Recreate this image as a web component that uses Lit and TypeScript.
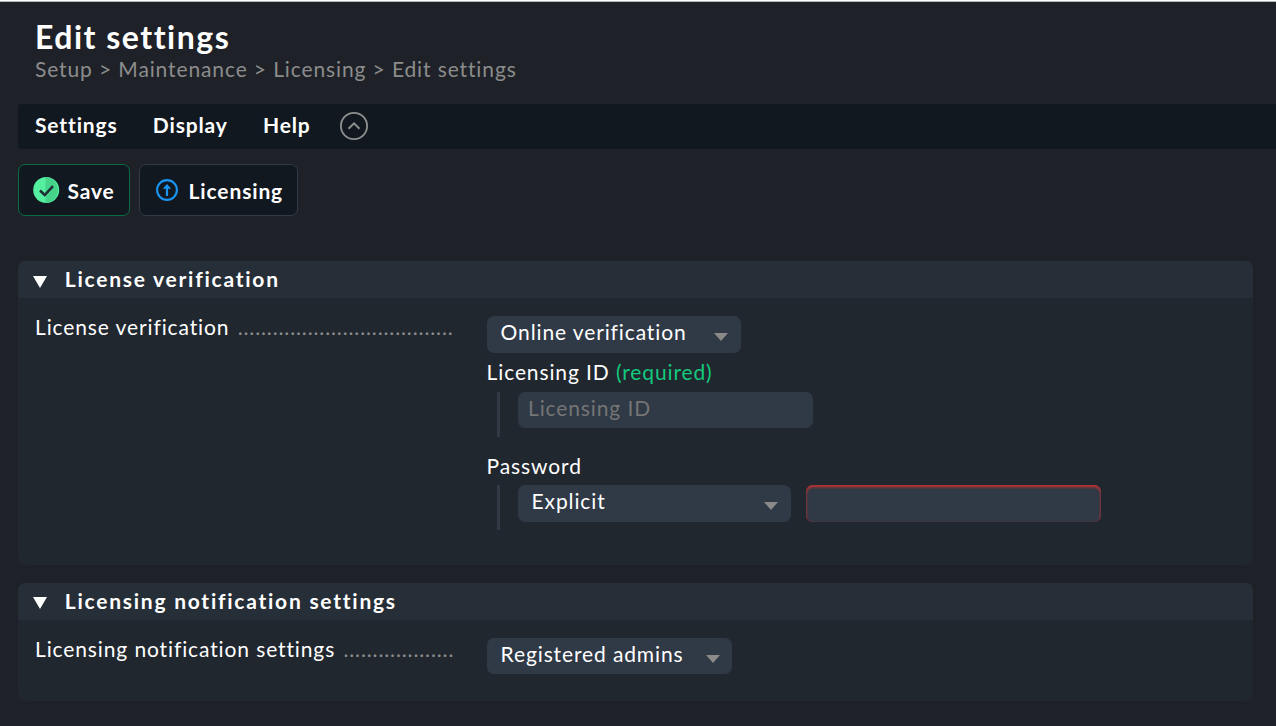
import { LitElement, html, css } from "lit";
import { customElement, property } from "lit/decorators.js";

@customElement("drop-down")
class DropDown extends LitElement {
  @property() value = "";
  static styles = css`
    :host { display: flex; box-sizing: border-box; height: 37px; padding: 0 13px 0 14px; border-radius: 7px; background: #303946; color: #fff; justify-content: space-between; }
    .value { line-height: 32px; white-space: nowrap; }
    svg { display: block; margin-top: 17px; }
  `;
  render() {
    return html`<span class="value">${this.value}</span>
      <svg width="14" height="8" viewBox="0 0 14 8"><path d="M0 0H14L7 8Z" fill="#8c8a88" /></svg>`;
  }
}

@customElement("fold-panel")
class FoldPanel extends LitElement {
  @property() heading = "";
  @property() label = "";
  @property({ type: Number }) dots = 0;
  static styles = css`
    :host { display: flex; flex-direction: column; box-sizing: border-box; border-radius: 7px; overflow: hidden; background: #21272e; }
    .head { display: flex; height: 37px; background: #262e37; padding-left: 15px; gap: 17.8px; font-weight: 700; letter-spacing: 1.75px; line-height: 36px; }
    .head svg { display: block; margin-top: var(--fold-top, 15px); }
    .row { display: flex; padding: 18px 0 0 17px; }
    .label { width: 419px; margin-right: 32.6px; height: 24px; line-height: 22px; white-space: nowrap; }
    .dots { color: #8c8c8c; margin-left: 2px; }
  `;
  render() {
    return html`<div class="head">
        <svg width="14" height="12" viewBox="0 0 14 12"><path d="M0 0H14L7 12Z" fill="#fff" /></svg>
        <span>${this.heading}</span>
      </div>
      <div class="row">
        <div class="label">${this.label} <span class="dots">${".".repeat(this.dots)}</span></div>
        <slot></slot>
      </div>`;
  }
}

@customElement("app-root")
class AppRoot extends LitElement {
  static styles = css`
    :host { display: block; box-sizing: border-box; height: 726px; overflow: hidden; background: #1e2228; color: #fff; font: 21px/24px Lato, sans-serif; letter-spacing: 0.88px; border-top: 1px solid #fff; }
    .page { border-top: 1px solid #b3b7ba; padding: 15px 0 0 18px; }
    .title { margin: 0; padding: 1px 0 0 17px; font-size: 32px; line-height: 38px; height: 37px; font-weight: 700; letter-spacing: 1.5px; }
    .crumbs { padding-left: 17px; line-height: 28px; color: #8c8c8c; }
    .menu { display: flex; box-sizing: border-box; height: 45px; margin-top: 21px; padding: 0 17px; gap: 35.2px; background: #11181f; border-radius: 4px 0 0 4px; font-weight: 700; line-height: 42px; letter-spacing: 0.86px; }
    .menu svg { display: block; margin: 8px 0 0 -6px; }
    .actions { display: flex; gap: 9px; margin-top: 15px; }
    .action { display: flex; box-sizing: border-box; height: 52px; border: 1px solid #313a47; border-radius: 7px; background: #11181f; font-weight: 700; line-height: 52px; letter-spacing: 0.86px; white-space: nowrap; }
    .action svg { display: block; }
    .save { width: 112px; border-color: #0b6b42; padding-left: 14px; gap: 7.4px; }
    .save svg { margin-top: 12px; }
    .lic { width: 159px; padding-left: 16px; gap: 10.6px; }
    .lic svg { margin-top: 14px; }
    .panels { display: flex; flex-direction: column; gap: 18px; width: 1235px; margin-top: 45px; }
    .first { height: 304px; }
    .second { height: 118px; --fold-top: 14px; }
    .online { width: 254px; }
    .registered { width: 245px; height: 36px; padding-right: 12px; }
    .explicit { width: 273px; padding-left: 13.6px; }
    .cap { line-height: 24px; }
    .cap.id { margin: 7px 0 8px; }
    .cap.pw { margin: 17px 0 7px; }
    .req { color: #13c97d; }
    .sub { display: flex; gap: 15px; margin-left: 10.4px; border-left: 3px solid #303946; padding-left: 18px; height: 45px; }
    .field { box-sizing: border-box; width: 295px; height: 36px; border-radius: 7px; background: #303946; color: #757575; padding-left: 10px; line-height: 32px; }
    .field.bad { height: 37px; box-shadow: inset 0 2px 3px 0 #c83232, inset 0 0 1px 0 #c83232; }
  `;
  render() {
    return html`<div class="page">
      <h1 class="title">Edit settings</h1>
      <div class="crumbs">Setup &gt; Maintenance &gt; Licensing &gt; Edit settings</div>
      <div class="menu">
        <span>Settings</span><span>Display</span><span>Help</span>
        <svg width="28" height="28" viewBox="0 0 28 28" fill="none" stroke="#8f8f8f"><circle cx="14" cy="14" r="13.1" stroke-width="1.8" /><path d="M8.5 16.7L14 11.3L19.5 16.7" stroke-width="1.9" /></svg>
      </div>
      <div class="actions">
        <div class="action save">
          <svg width="27" height="27" viewBox="0 0 27 27"><circle cx="13.2" cy="13" r="13" fill="#55efa0" /><path d="M12.5 0.02A13 13 0 0 1 12.5 26Z" fill="#45d48a" /><path d="M7 13.5L11.7 18L20 9.2" fill="none" stroke="#1e2d35" stroke-width="2.5" /></svg>
          <span>Save</span>
        </div>
        <div class="action lic">
          <svg width="22" height="22" viewBox="0 0 22 22"><circle cx="11" cy="11" r="9.9" fill="none" stroke="#1a94f2" stroke-width="2.1" /><path d="M11 5L15.3 9.7H12.1V17H9.9V9.7H6.7Z" fill="#1a94f2" /></svg>
          <span>Licensing</span>
        </div>
      </div>
      <div class="panels">
        <fold-panel class="first" heading="License verification" label="License verification" dots="37">
          <div>
            <drop-down class="online" value="Online verification"></drop-down>
            <div class="cap id">Licensing ID <span class="req">(required)</span></div>
            <div class="sub"><div class="field">Licensing ID</div></div>
            <div class="cap pw">Password</div>
            <div class="sub"><drop-down class="explicit" value="Explicit"></drop-down><div class="field bad"></div></div>
          </div>
        </fold-panel>
        <fold-panel class="second" heading="Licensing notification settings" label="Licensing notification settings" dots="19">
          <drop-down class="registered" value="Registered admins"></drop-down>
        </fold-panel>
      </div>
    </div>`;
  }
}
